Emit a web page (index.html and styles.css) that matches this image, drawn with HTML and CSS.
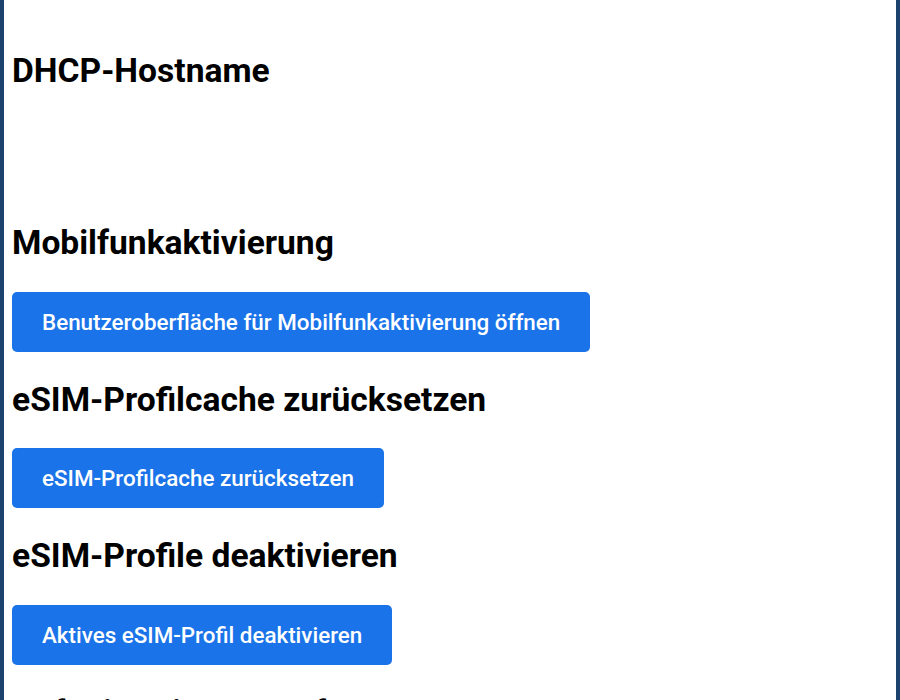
FILE: index.html
```html
<!DOCTYPE html>
<html lang="de">
<head>
<meta charset="utf-8">
<link rel="stylesheet" href="styles.css">
</head>
<body>
<div class="frame">
  <main class="content">
    <section class="block block-dhcp">
      <h2 class="title">DHCP-Hostname</h2>
      <div class="empty"></div>
    </section>
    <section class="block">
      <h2 class="title">Mobilfunkaktivierung</h2>
      <button class="btn">Benutzeroberfläche für Mobilfunkaktivierung öffnen</button>
    </section>
    <section class="block">
      <h2 class="title">eSIM-Profilcache zurücksetzen</h2>
      <button class="btn">eSIM-Profilcache zurücksetzen</button>
    </section>
    <section class="block">
      <h2 class="title">eSIM-Profile deaktivieren</h2>
      <button class="btn">Aktives eSIM-Profil deaktivieren</button>
    </section>
    <section class="block">
      <h2 class="title">Auf Migrationen prüfen</h2>
    </section>
  </main>
</div>
</body>
</html>
```

FILE: styles.css
```css
html, body {
  margin: 0;
  padding: 0;
  background: #ffffff;
  height: 100%;
  overflow: hidden;
}
body {
  font-family: Roboto, "Noto Sans", "Liberation Sans", sans-serif;
  color: #000000;
}
.frame {
  height: 700px;
  border-left: 4px solid #1c436d;
  border-right: 4px solid #1c436d;
  box-sizing: border-box;
  background: #ffffff;
  overflow: hidden;
}
.content {
  padding: 51px 8px 0 8px;
  display: flex;
  flex-direction: column;
}
.block {
  display: flex;
  flex-direction: column;
  align-items: flex-start;
  gap: 28.5px;
  margin-bottom: 28px;
}
.block-dhcp {
  gap: 0;
}
.empty {
  height: 104px;
}
.title {
  margin: 0;
  font-size: 33.6px;
  font-weight: 700;
  line-height: 40px;
  white-space: nowrap;
}
.btn {
  font-family: Roboto, "Noto Sans", "Liberation Sans", sans-serif;
  font-size: 22.4px;
  font-weight: 500;
  color: #ffffff;
  background: #1a73e8;
  border: none;
  border-radius: 5px;
  height: 60px;
  padding: 0 30px;
  cursor: pointer;
}
```
